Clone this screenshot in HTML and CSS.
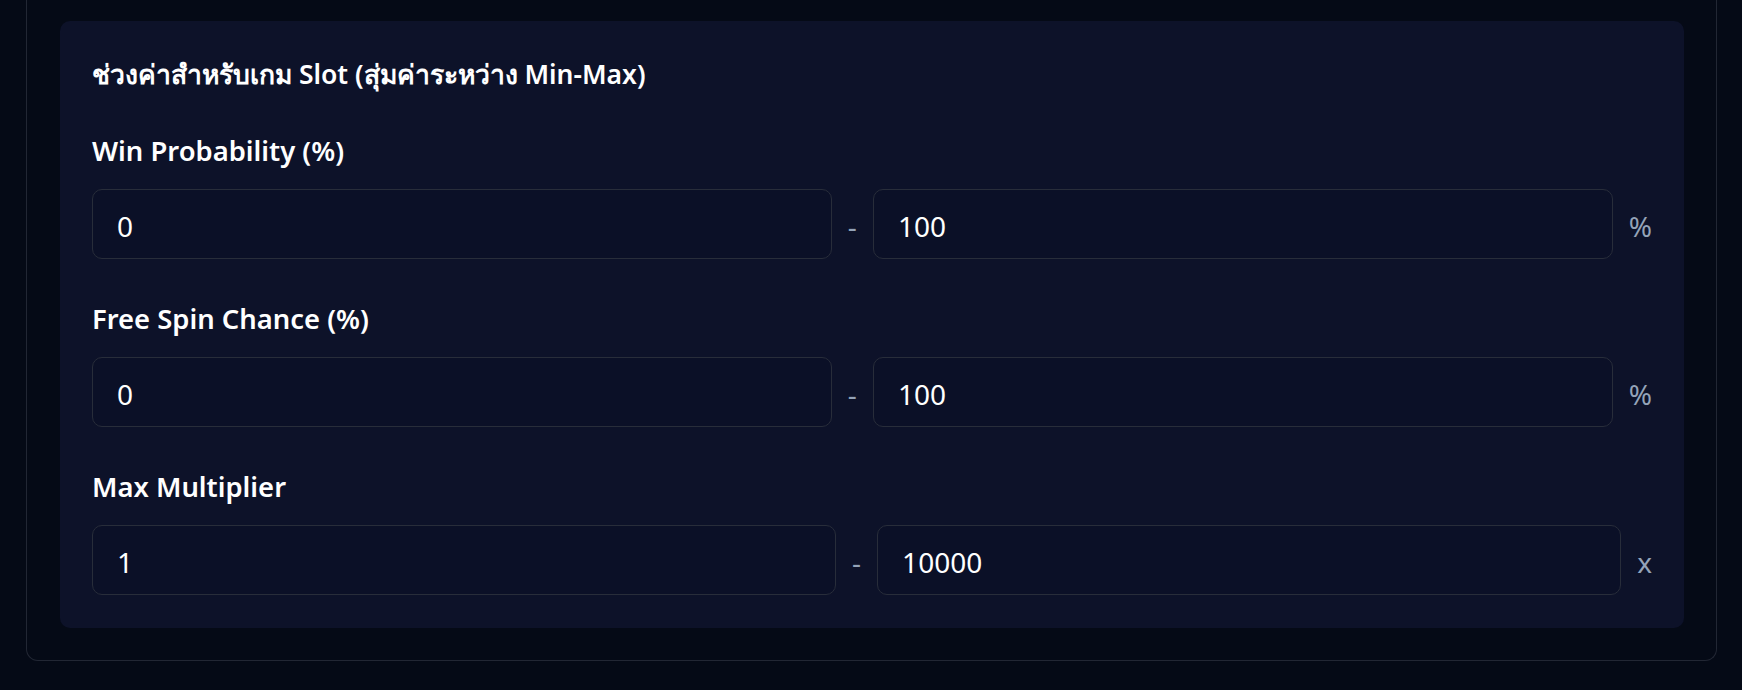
FILE: index.html
```html
<!DOCTYPE html>
<html lang="th">
<head>
<meta charset="utf-8">
<title>Slot settings</title>
<link rel="stylesheet" href="styles.css">
</head>
<body>
<div class="panel">
  <section class="card">
    <h3 class="card-title">ช่วงค่าสำหรับเกม Slot (สุ่มค่าระหว่าง Min-Max)</h3>
    <div class="field">
      <label class="field-label">Win Probability (%)</label>
      <div class="range-row">
        <input class="range-input" type="text" value="0">
        <span class="range-sep">-</span>
        <input class="range-input" type="text" value="100">
        <span class="range-unit">%</span>
      </div>
    </div>
    <div class="field">
      <label class="field-label">Free Spin Chance (%)</label>
      <div class="range-row">
        <input class="range-input" type="text" value="0">
        <span class="range-sep">-</span>
        <input class="range-input" type="text" value="100">
        <span class="range-unit">%</span>
      </div>
    </div>
    <div class="field">
      <label class="field-label">Max Multiplier</label>
      <div class="range-row">
        <input class="range-input" type="text" value="1">
        <span class="range-sep">-</span>
        <input class="range-input" type="text" value="10000">
        <span class="range-unit">x</span>
      </div>
    </div>
  </section>
</div>
</body>
</html>
```

FILE: styles.css
```css
html, body {
  margin: 0;
  padding: 0;
  background: #050a16;
  font-family: "Noto Sans", "Open Sans", sans-serif;
  color: #f8fafc;
}

.panel {
  margin: 0 25px 0 26px;
  padding: 21px 32px 32px 33px;
  border: 1px solid #222734;
  border-top: 0;
  border-radius: 0 0 12px 12px;
}

.card {
  background: #0d1229;
  border-radius: 10px;
  padding: 36px 32px 33px;
  display: flex;
  flex-direction: column;
  gap: 42px;
}

.card-title {
  margin: 0;
  font-size: 26.5px;
  line-height: 34px;
  font-weight: 600;
  color: #ffffff;
}

.field {
  display: flex;
  flex-direction: column;
  gap: 20px;
}

.field-label {
  font-size: 27.4px;
  line-height: 36px;
  font-weight: 600;
  color: #ffffff;
}

.range-row {
  display: flex;
  align-items: center;
  gap: 16px;
}

.range-input {
  flex: 1;
  min-width: 0;
  height: 70px;
  box-sizing: border-box;
  padding: 4px 24px 0;
  background: #0b1027;
  border: 1px solid #282d3a;
  border-radius: 10px;
  color: #ffffff;
  font-family: "Noto Sans", sans-serif;
  font-size: 28px;
  outline: none;
}

.range-sep,
.range-unit {
  color: #94a3b8;
  font-size: 28px;
  padding-top: 3px;
}
```
